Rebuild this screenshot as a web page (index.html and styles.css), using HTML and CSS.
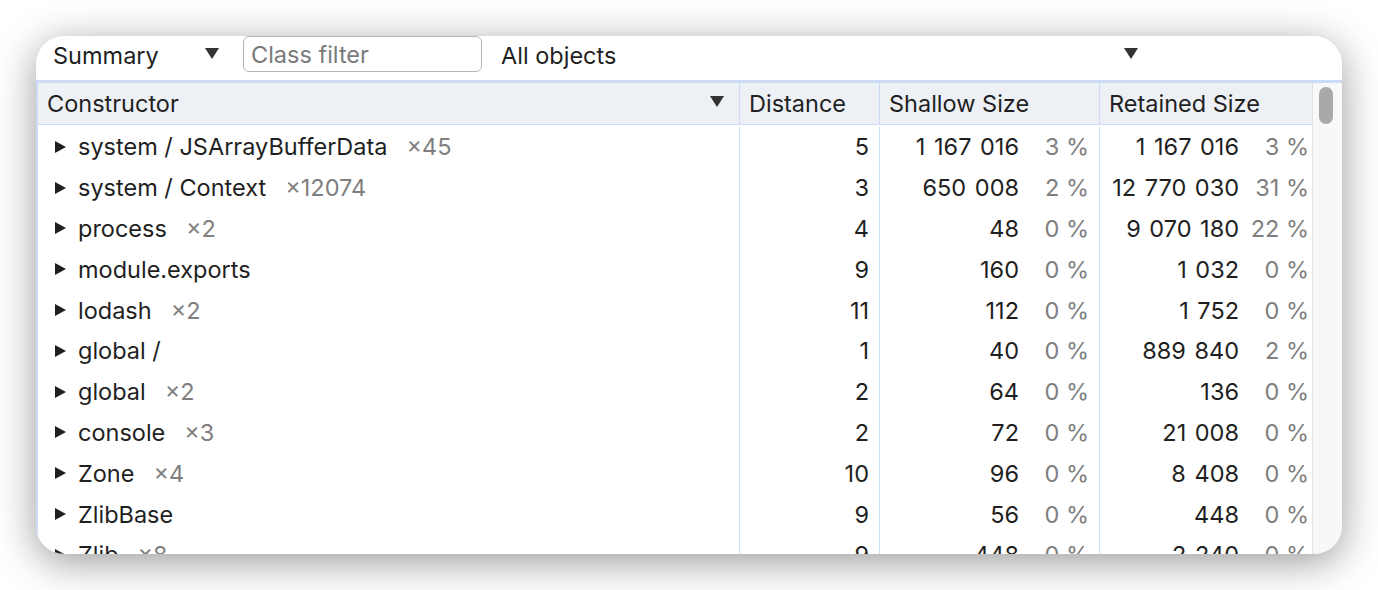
FILE: index.html
```html
<!DOCTYPE html>
<html>
<head>
<meta charset="utf-8">
<link rel="stylesheet" href="styles.css">
</head>
<body>
<div class="card">
  <div class="toolbar">
    <div class="select summary"><span>Summary</span><span class="caret"></span></div>
    <input class="filter" type="text" placeholder="Class filter">
    <div class="select objects"><span>All objects</span><span class="caret"></span></div>
  </div>
  <div class="grid">
    <div class="table">
      <div class="row head">
        <div class="c c1"><span>Constructor</span><span class="caret"></span></div>
        <div class="c c2">Distance</div>
        <div class="c c3">Shallow Size</div>
        <div class="c c4">Retained Size</div>
      </div>
      <div class="body">
      <div class="row"><div class="c c1"><span class="tri"></span><span class="name">system / JSArrayBufferData</span><span class="cnt">×45</span></div><div class="c c2 num">5</div><div class="c c3 num"><span class="v">1 167 016</span><span class="pct">3 %</span></div><div class="c c4 num"><span class="v">1 167 016</span><span class="pct">3 %</span></div></div>
      <div class="row"><div class="c c1"><span class="tri"></span><span class="name">system / Context</span><span class="cnt">×12074</span></div><div class="c c2 num">3</div><div class="c c3 num"><span class="v">650 008</span><span class="pct">2 %</span></div><div class="c c4 num"><span class="v">12 770 030</span><span class="pct">31 %</span></div></div>
      <div class="row"><div class="c c1"><span class="tri"></span><span class="name">process</span><span class="cnt">×2</span></div><div class="c c2 num">4</div><div class="c c3 num"><span class="v">48</span><span class="pct">0 %</span></div><div class="c c4 num"><span class="v">9 070 180</span><span class="pct">22 %</span></div></div>
      <div class="row"><div class="c c1"><span class="tri"></span><span class="name">module.exports</span></div><div class="c c2 num">9</div><div class="c c3 num"><span class="v">160</span><span class="pct">0 %</span></div><div class="c c4 num"><span class="v">1 032</span><span class="pct">0 %</span></div></div>
      <div class="row"><div class="c c1"><span class="tri"></span><span class="name">lodash</span><span class="cnt">×2</span></div><div class="c c2 num">11</div><div class="c c3 num"><span class="v">112</span><span class="pct">0 %</span></div><div class="c c4 num"><span class="v">1 752</span><span class="pct">0 %</span></div></div>
      <div class="row"><div class="c c1"><span class="tri"></span><span class="name">global /</span></div><div class="c c2 num">1</div><div class="c c3 num"><span class="v">40</span><span class="pct">0 %</span></div><div class="c c4 num"><span class="v">889 840</span><span class="pct">2 %</span></div></div>
      <div class="row"><div class="c c1"><span class="tri"></span><span class="name">global</span><span class="cnt">×2</span></div><div class="c c2 num">2</div><div class="c c3 num"><span class="v">64</span><span class="pct">0 %</span></div><div class="c c4 num"><span class="v">136</span><span class="pct">0 %</span></div></div>
      <div class="row"><div class="c c1"><span class="tri"></span><span class="name">console</span><span class="cnt">×3</span></div><div class="c c2 num">2</div><div class="c c3 num"><span class="v">72</span><span class="pct">0 %</span></div><div class="c c4 num"><span class="v">21 008</span><span class="pct">0 %</span></div></div>
      <div class="row"><div class="c c1"><span class="tri"></span><span class="name">Zone</span><span class="cnt">×4</span></div><div class="c c2 num">10</div><div class="c c3 num"><span class="v">96</span><span class="pct">0 %</span></div><div class="c c4 num"><span class="v">8 408</span><span class="pct">0 %</span></div></div>
      <div class="row"><div class="c c1"><span class="tri"></span><span class="name">ZlibBase</span></div><div class="c c2 num">9</div><div class="c c3 num"><span class="v">56</span><span class="pct">0 %</span></div><div class="c c4 num"><span class="v">448</span><span class="pct">0 %</span></div></div>
      <div class="row"><div class="c c1"><span class="tri"></span><span class="name">Zlib</span><span class="cnt">×8</span></div><div class="c c2 num">9</div><div class="c c3 num"><span class="v">448</span><span class="pct">0 %</span></div><div class="c c4 num"><span class="v">2 240</span><span class="pct">0 %</span></div></div>
      </div>
    </div>
    <div class="scroll"><div class="thumb"></div></div>
  </div>
</div>
</body>
</html>
```
FILE: styles.css
```css
html, body {
  margin: 0;
  background: #fff;
}
body {
  font-family: Inter, "Liberation Sans", sans-serif;
  font-size: 23.5px;
  color: #1f1f1f;
  height: 590px;
}
.card {
  margin: 36px 0 0 36px;
  width: 1306px;
  height: 518px;
  border-radius: 28px;
  overflow: hidden;
  background: #fff;
  box-shadow: 0 8px 40px rgba(0, 0, 0, 0.4);
  display: flex;
  flex-direction: column;
}
.toolbar {
  height: 44px;
  flex: none;
  display: flex;
  align-items: flex-start;
}
.select {
  height: 38px;
  display: flex;
  align-items: center;
  justify-content: space-between;
}
.summary {
  margin-left: 17px;
  width: 166px;
}
.objects {
  margin-left: 19px;
  width: 637px;
}
.caret {
  width: 0;
  height: 0;
  border-left: 7px solid transparent;
  border-right: 7px solid transparent;
  border-top: 11px solid #333;
  margin-top: -4px;
}
.filter {
  margin-left: 24px;
  width: 239px;
  height: 36px;
  box-sizing: border-box;
  border: 1.5px solid #b5b5b5;
  border-radius: 6px;
  font: inherit;
  padding: 0 7px;
  outline: none;
}
.filter::placeholder {
  color: #7a7a7a;
}
.grid {
  flex: 1;
  display: flex;
  border-top: 3px solid #cddcf5;
  overflow: hidden;
}
.table {
  border-left: 2px solid #cddcf5;
  width: 1275px;
}
.body {
  padding-top: 1.5px;
}
.row {
  display: flex;
  height: 40.8px;
}
.row.head {
  height: 41px;
  background: #edf0f5;
  border-bottom: 1.5px solid #cddcf5;
}
.c {
  box-sizing: border-box;
  border-right: 1px solid #cddcf5;
  display: flex;
  align-items: center;
  white-space: nowrap;
}
.head .c {
  padding-left: 9px;
}
.c1 { width: 702px; }
.c2 { width: 140px; }
.c3 { width: 220px; }
.c4 { width: 211px; border-right: none; }
.head .c1 {
  justify-content: space-between;
  padding-right: 15px;
}
.row .c1 .tri {
  width: 0;
  height: 0;
  border-top: 6.5px solid transparent;
  border-bottom: 6.5px solid transparent;
  border-left: 11px solid #1f1f1f;
  margin-left: 17px;
  margin-right: 12px;
}
.cnt {
  color: #7f7f7f;
  margin-left: 19px;
}
.num {
  justify-content: flex-end;
  padding-right: 10px;
}
.v {
  word-spacing: 2px;
}
.c4.num {
  padding-right: 2px;
}
.pct {
  color: #7f7f7f;
  width: 70px;
  text-align: right;
}
.scroll {
  width: 29px;
  flex: none;
  border-left: 1px solid #e3e3e3;
  background: #f8f8f8;
  padding-top: 4px;
}
.thumb {
  width: 14px;
  height: 37px;
  margin-left: 6px;
  border-radius: 7px;
  background: #a9a9a9;
}
```
